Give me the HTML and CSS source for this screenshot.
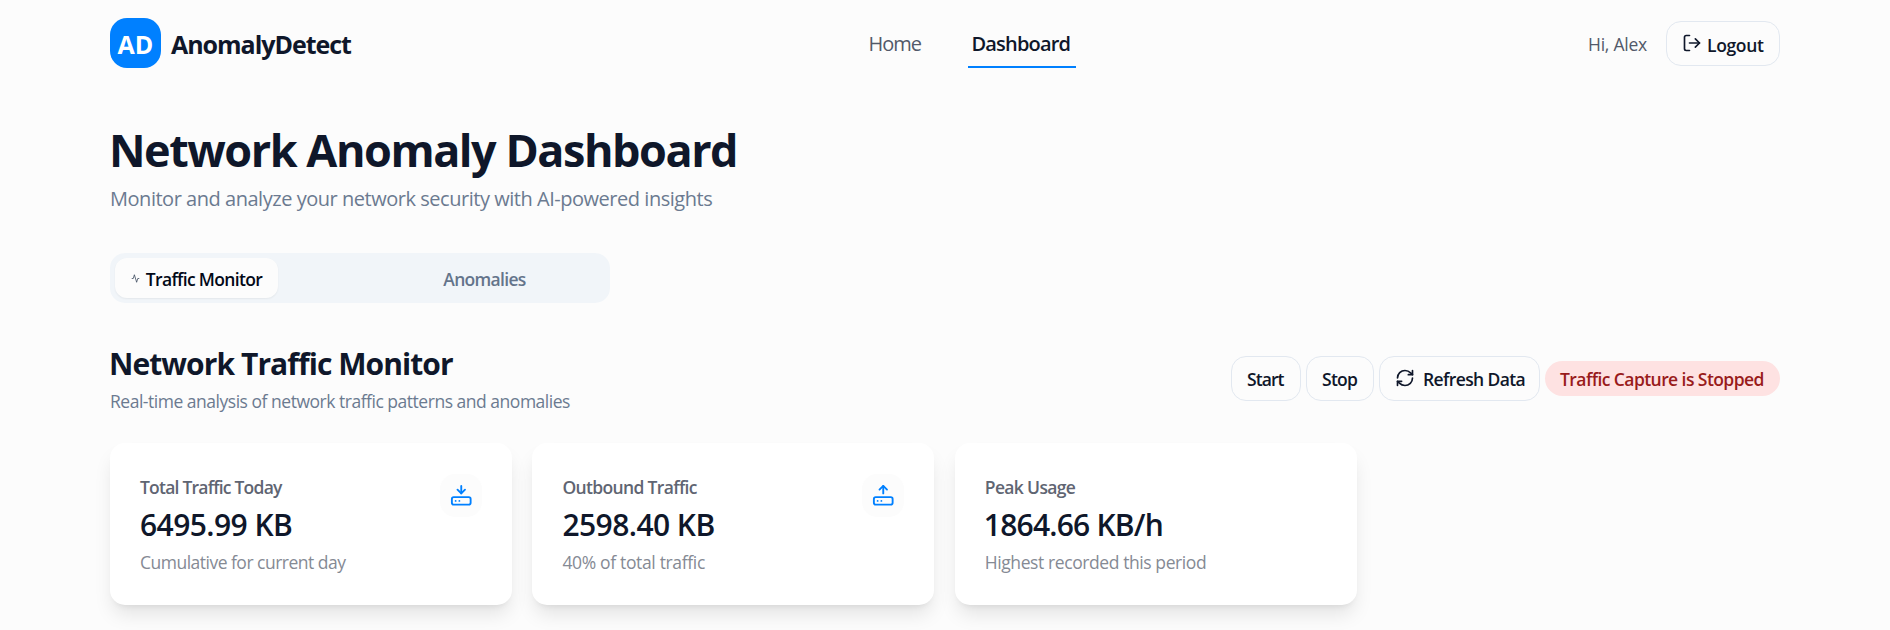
FILE: index.html
```
<!DOCTYPE html>
<html lang="en">
<head>
<meta charset="utf-8">
<title>AnomalyDetect</title>
<link rel="stylesheet" href="styles.css">
</head>
<body>
<header class="header">
  <div class="brand"><span class="logo">AD</span><span class="brand-name">AnomalyDetect</span></div>
  <nav class="nav">
    <a class="nav-link home">Home</a>
    <a class="nav-link active">Dashboard</a>
  </nav>
  <div class="user">
    <span class="greeting">Hi, Alex</span>
    <button class="btn logout">
      <svg class="icon" viewBox="0 0 24 24"><path d="M9 21H5a2 2 0 0 1-2-2V5a2 2 0 0 1 2-2h4"/><path d="m16 17 5-5-5-5"/><path d="M21 12H9"/></svg>
      <span>Logout</span>
    </button>
  </div>
</header>
<main class="main">
  <h1 class="title">Network Anomaly Dashboard</h1>
  <p class="subtitle">Monitor and analyze your network security with AI-powered insights</p>
  <div class="tabs">
    <div class="tab-cell"><button class="tab selected"><svg class="icon tiny" viewBox="0 0 24 24"><path d="M21 12h-3l-3 10L9 2l-3 10H3"/></svg><span>Traffic Monitor</span></button></div>
    <div class="tab-cell"><button class="tab wide">Anomalies</button></div>
  </div>
  <section class="section-head">
    <div>
      <h2 class="section-title">Network Traffic Monitor</h2>
      <p class="section-sub">Real-time analysis of network traffic patterns and anomalies</p>
    </div>
    <div class="actions">
      <button class="btn start">Start</button>
      <button class="btn stop">Stop</button>
      <button class="btn refresh">
        <svg class="icon" viewBox="0 0 24 24"><path d="M3 12a9 9 0 0 1 9-9 9.75 9.75 0 0 1 6.74 2.74L21 8"/><path d="M21 3v5h-5"/><path d="M21 12a9 9 0 0 1-9 9 9.75 9.75 0 0 1-6.74-2.74L3 16"/><path d="M8 16H3v5"/></svg>
        <span>Refresh Data</span>
      </button>
      <span class="status">Traffic Capture is Stopped</span>
    </div>
  </section>
  <section class="cards">
    <article class="card">
      <div>
        <p class="card-label total">Total Traffic Today</p>
        <p class="card-value">6495.99 KB</p>
        <p class="card-note">Cumulative for current day</p>
      </div>
      <span class="card-icon"><svg class="icon blue" viewBox="0 0 24 24"><path d="M12 2v8"/><path d="m16 6-4 4-4-4"/><rect width="20" height="8" x="2" y="14" rx="2"/><path d="M6 18h.01"/><path d="M10 18h.01"/></svg></span>
    </article>
    <article class="card">
      <div>
        <p class="card-label">Outbound Traffic</p>
        <p class="card-value">2598.40 KB</p>
        <p class="card-note share">40% of total traffic</p>
      </div>
      <span class="card-icon"><svg class="icon blue" viewBox="0 0 24 24"><path d="m16 6-4-4-4 4"/><path d="M12 2v8"/><rect width="20" height="8" x="2" y="14" rx="2"/><path d="M6 18h.01"/><path d="M10 18h.01"/></svg></span>
    </article>
    <article class="card">
      <div>
        <p class="card-label">Peak Usage</p>
        <p class="card-value peak">1864.66 KB/h</p>
        <p class="card-note period">Highest recorded this period</p>
      </div>
    </article>
  </section>
</main>
</body>
</html>
```
FILE: styles.css
```
* { box-sizing: border-box; }

body {
  margin: 0;
  height: 630px;
  overflow: hidden;
  background: #fcfcfc;
  color: #0f172a;
  font-family: "Open Sans", "Noto Sans", sans-serif;
  font-size: 17.5px;
  font-weight: 400;
  white-space: nowrap;
}

h1, h2, p { margin: 0; }

button {
  border: 0;
  background: none;
  padding: 0;
  font: inherit;
  color: inherit;
}

.icon {
  width: 20px;
  height: 20px;
  flex: none;
  fill: none;
  stroke: currentColor;
  stroke-width: 2;
  stroke-linecap: round;
  stroke-linejoin: round;
}

.header {
  display: flex;
  align-items: center;
  justify-content: space-between;
  height: 86px;
  padding: 0 110px;
}

.brand {
  display: flex;
  align-items: center;
  gap: 10px;
  width: 243px;
  font-size: 25px;
  font-weight: 700;
}

.logo {
  display: flex;
  align-items: center;
  justify-content: center;
  width: 51px;
  height: 50px;
  padding-top: 2px;
  border-radius: 17px;
  background: #0080ff;
  color: #fff;
}

.brand-name { padding-top: 2px; letter-spacing: -1.03px; }

.nav { display: flex; gap: 41px; font-size: 20px; }

.nav-link {
  width: 108px;
  height: 50px;
  padding: 0 4px;
  border-bottom: 2px solid transparent;
  line-height: 52px;
}

.nav-link.home { width: 62px; color: #525969; letter-spacing: -1.05px; }

.nav-link.active {
  border-color: #0080ff;
  font-weight: 600;
  letter-spacing: -0.82px;
}

.user { display: flex; align-items: center; justify-content: space-between; width: 193px; }

.greeting { padding: 2px 0 0 1px; color: #525969; letter-spacing: -0.24px; }

.btn {
  display: flex;
  align-items: center;
  height: 45px;
  padding: 2px 15px 0;
  border: 1px solid #e2e8f0;
  border-radius: 15px;
  font-weight: 600;
  letter-spacing: -0.62px;
}

.btn .icon { margin-bottom: 3px; }

.logout { width: 114px; margin-top: 1px; gap: 5px; letter-spacing: -0.34px; }

.main { padding: 39px 110px 0; }

.title {
  font-size: 45px;
  font-weight: 700;
  line-height: 50px;
  letter-spacing: -1.47px;
  margin-left: -1px;
}

.subtitle {
  margin-top: 9px;
  color: #6b7a90;
  font-size: 20px;
  line-height: 30px;
  letter-spacing: -0.47px;
}

.tabs {
  display: grid;
  grid-template-columns: 1fr 1fr;
  width: 500px;
  height: 50px;
  margin-top: 39px;
  padding: 5px;
  border-radius: 15px;
  background: #f1f5f9;
}

.tab {
  display: flex;
  align-items: center;
  justify-content: center;
  height: 40px;
  padding-top: 1px;
  border-radius: 12px;
  color: #64748b;
  font-weight: 600;
  letter-spacing: -0.69px;
}

.tab.wide { width: 100%; padding-left: 4px; }

.tab.selected {
  width: 163px;
  gap: 6px;
  background: #fcfcfc;
  color: #020817;
  box-shadow: 0 1px 2px rgba(0, 0, 0, 0.06);
  letter-spacing: -0.66px;
}

.icon.tiny { width: 9px; height: 9px; margin-bottom: 1px; color: #334155; }

.section-head {
  display: flex;
  align-items: center;
  justify-content: space-between;
  height: 70px;
  margin-top: 40px;
}

.section-title {
  padding-top: 1px;
  margin-left: -1px;
  font-size: 30px;
  font-weight: 700;
  line-height: 40px;
  letter-spacing: -0.93px;
}

.section-sub {
  margin-top: 5px;
  color: #6b7a90;
  line-height: 25px;
  letter-spacing: -0.48px;
}

.actions { display: flex; align-items: center; gap: 5px; }
.start { width: 70px; letter-spacing: -0.93px; }
.stop { width: 68px; letter-spacing: -0.74px; }
.refresh { width: 161px; gap: 8px; }

.status {
  width: 235px;
  height: 35px;
  padding: 1px 15px 0;
  border-radius: 18px;
  background: #fee2e2;
  color: #991b1b;
  font-weight: 600;
  line-height: 35px;
  letter-spacing: -0.57px;
}

.cards {
  display: grid;
  grid-template-columns: repeat(3, 402px);
  gap: 20.4px;
  margin-top: 30px;
}

.card {
  display: flex;
  justify-content: space-between;
  height: 162px;
  padding: 31px 30px 0;
  border-radius: 15px;
  background: #fff;
  box-shadow: 0 12.5px 18.75px -3.75px rgba(0, 0, 0, 0.1), 0 5px 7.5px -5px rgba(0, 0, 0, 0.1);
}

.card-label {
  color: #5f6572;
  font-weight: 600;
  line-height: 27px;
  letter-spacing: -0.65px;
}

.card-label.total { letter-spacing: -0.78px; }

.card-value {
  font-size: 30px;
  font-weight: 600;
  line-height: 47px;
  letter-spacing: -0.56px;
}

.card-value.peak { margin-left: -1px; letter-spacing: -0.78px; }

.card-note { color: #858a94; line-height: 28px; letter-spacing: -0.51px; }
.card-note.share { letter-spacing: -0.34px; }
.card-note.period { letter-spacing: -0.41px; }

.card-icon {
  width: 42.5px;
  height: 42.5px;
  padding: 10px;
  border-radius: 15px;
  background: #fcfcfc;
}

.icon.blue { display: block; width: 22.5px; height: 22.5px; color: #0080ff; }
```
